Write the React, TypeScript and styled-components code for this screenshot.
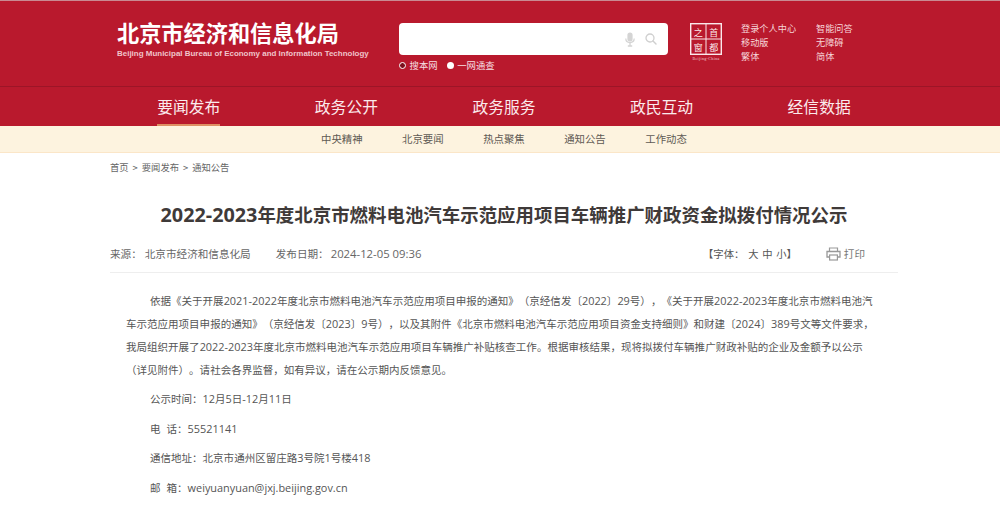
import React from 'react';
import styled, { createGlobalStyle } from 'styled-components';

const GlobalStyle = createGlobalStyle`
  html, body {
    margin: 0;
    padding: 0;
    background: #fff;
    font-family: "Open Sans", "Noto Sans CJK SC", sans-serif;
    text-spacing-trim: space-all;
    overflow: hidden;
  }
`;

const Page = styled.div`
  width: 1000px;
  height: 509px;
  overflow: hidden;
`;

const Header = styled.header`
  background: #b9192d;
  border-top: 1px solid #c98a92;
`;

const TopBar = styled.div`
  height: 85px;
  display: flex;
  padding-left: 117px;
  border-bottom: 1px solid #9c1527;
`;

const Brand = styled.div`
  width: 282px;
  padding-top: 18px;
  flex-shrink: 0;
`;

const BrandName = styled.div`
  font-family: "Noto Sans CJK SC", sans-serif;
  font-size: 22.2px;
  line-height: 26px;
  font-weight: 700;
  color: #fff;
  white-space: nowrap;
`;

const BrandEnglish = styled.div`
  margin-top: 3px;
  font-family: "Liberation Sans", sans-serif;
  font-size: 7.97px;
  line-height: 11px;
  font-weight: 700;
  color: #f0c4ca;
  white-space: nowrap;
`;

const SearchColumn = styled.div`
  width: 269px;
  padding-top: 22px;
  flex-shrink: 0;
`;

const SearchBox = styled.div`
  height: 32px;
  background: #fff;
  border-radius: 4px;
  display: flex;
  align-items: center;
  justify-content: flex-end;
  gap: 10px;
  padding-right: 11px;
  box-sizing: border-box;
`;

const ScopeRow = styled.div`
  display: flex;
  gap: 9px;
  margin-top: 3px;
`;

const Scope = styled.div`
  display: flex;
  align-items: center;
  gap: 3.5px;
  font-family: "Noto Sans CJK SC", sans-serif;
  font-size: 9.4px;
  line-height: 14px;
  color: #f6dfe2;
`;

const Dot = styled.span<{ $checked?: boolean }>`
  width: 7px;
  height: 7px;
  border-radius: 50%;
  box-sizing: border-box;
  background: ${(p) => (p.$checked ? '#7c0f1d' : '#fff')};
  border: ${(p) => (p.$checked ? '1.5px solid #fff' : 'none')};
`;

const Emblem = styled.div`
  margin: 22px 0 0 20px;
  width: 36px;
  flex-shrink: 0;
`;

const LinkGrid = styled.div`
  display: grid;
  grid-template-columns: 75px auto;
  grid-auto-rows: 14px;
  margin: 20px 0 0 17px;
  font-family: "Noto Sans CJK SC", sans-serif;
  font-size: 9.2px;
  line-height: 14px;
  color: #f6d5d9;
`;

const NavBar = styled.nav`
  height: 39px;
  padding-left: 110px;
  display: flex;
`;

const NavItem = styled.a<{ $active?: boolean }>`
  width: 157.6px;
  display: flex;
  justify-content: center;
  span {
    display: block;
    height: 37px;
    font-family: "Noto Sans CJK SC", sans-serif;
    font-size: 15.8px;
    line-height: 39px;
    color: #fbeaec;
    white-space: nowrap;
    border-bottom: 2px solid ${(p) => (p.$active ? '#de8f63' : 'transparent')};
  }
`;

const SubNav = styled.div`
  height: 26px;
  background: #fdf3df;
  border-bottom: 1px solid #fbe6c8;
  display: flex;
  gap: 39.5px;
  padding-left: 321px;
`;

const SubItem = styled.a`
  font-family: "Noto Sans CJK SC", sans-serif;
  font-size: 10.4px;
  line-height: 26px;
  color: #5f5a54;
  white-space: nowrap;
`;

const Main = styled.main`
  width: 788px;
  margin-left: 110px;
`;

const Crumbs = styled.div`
  display: flex;
  gap: 4px;
  padding-top: 7px;
  font-family: "Noto Sans CJK SC", sans-serif;
  font-size: 9.3px;
  line-height: 14px;
  color: #666;
`;

const Title = styled.h1`
  margin: 29px 0 0;
  font-family: "Open Sans", "Noto Sans CJK SC", sans-serif;
  font-size: 18.45px;
  line-height: 24px;
  font-weight: 700;
  color: #3f3a39;
  text-align: center;
  white-space: nowrap;
`;

const TitleYear = styled.span`
  font-size: 19.8px;
  line-height: 0;
`;

const Meta = styled.div`
  margin-top: 19px;
  height: 26px;
  display: flex;
  align-items: flex-start;
  border-bottom: 1px solid #eeeeee;
  font-size: 10.6px;
  line-height: 16px;
  color: #666;
  white-space: nowrap;
`;

const MetaLabel = styled.span<{ $gap?: number }>`
  margin-right: ${(p) => p.$gap ?? 2}px;
`;

const MetaValue = styled.span<{ $gap?: number }>`
  margin-right: ${(p) => p.$gap ?? 0}px;
`;

const MetaDate = styled.span`
  font-size: 11.3px;
`;

const MetaRight = styled.div`
  margin-left: auto;
  display: flex;
  align-items: center;
  height: 16px;
  padding-right: 33px;
`;

const FontSizer = styled.span`
  font-size: 10.3px;
  margin-right: 29px;
  color: #555;
`;

const Sizes = styled.span`
  margin-left: 4px;
  word-spacing: 1px;
`;

const Print = styled.span`
  display: flex;
  align-items: center;
  gap: 3px;
  color: #777;
`;

const Article = styled.article`
  margin-top: 17px;
  font-size: 10.52px;
  line-height: 23px;
  color: #555;
`;

const Para = styled.p`
  margin: 0 0 6.5px;
  text-indent: 40px;
`;

const BodyPara = styled.div`
  margin: 0 0 6px;
  padding-left: 16px;
`;

const Line = styled.span<{ $lead?: boolean }>`
  display: block;
  white-space: nowrap;
  padding-left: ${(p) => (p.$lead ? 24 : 0)}px;
`;

// latin runs sit a little larger than the CJK around them
const Num = styled.span`
  font-size: 10.9px;
  line-height: 0;
`;

const SpacedChar = styled.span`
  margin-right: 6px;
`;

const MicIcon = () => (
  <svg width="10" height="15" viewBox="0 0 10 15" aria-hidden="true">
    <rect x="2.4" y="0.5" width="5.2" height="9" rx="2.6" fill="#d4d4d4" />
    <path d="M0.8 6.5c0 5.4 8.4 5.4 8.4 0" fill="none" stroke="#d4d4d4" strokeWidth="1.2" />
    <path d="M5 11v2.6M2.8 14h4.4" stroke="#d4d4d4" strokeWidth="1.3" />
  </svg>
);

const SearchIcon = () => (
  <svg width="12" height="12" viewBox="0 0 12 12" aria-hidden="true">
    <circle cx="5" cy="5" r="4" fill="none" stroke="#cfcfcf" strokeWidth="1.3" />
    <path d="M8 8l3 3" stroke="#cfcfcf" strokeWidth="1.4" strokeLinecap="round" />
  </svg>
);

const CapitalLogo = () => (
  <svg width="36" height="38" viewBox="0 0 36 38" aria-hidden="true" fontFamily='"Noto Sans CJK SC", sans-serif'>
    <rect x="2.7" y="0.7" width="30.6" height="30.6" fill="none" stroke="#fbe9eb" strokeWidth="1.4" />
    <path d="M18 1v30M3 16h30" stroke="#fbe9eb" strokeWidth="1" />
    <text x="10.2" y="12.5" fontSize="9" fill="#fbe9eb" textAnchor="middle">之</text>
    <text x="25.8" y="12.5" fontSize="9" fill="#fbe9eb" textAnchor="middle">首</text>
    <text x="10.2" y="27.5" fontSize="9" fill="#fbe9eb" textAnchor="middle">窗</text>
    <text x="25.8" y="27.5" fontSize="9" fill="#fbe9eb" textAnchor="middle">都</text>
    <text x="18" y="37" fontSize="4" letterSpacing="0.35" fill="#f3cdd2" textAnchor="middle" fontFamily='"Liberation Serif", serif'>Beijing-China</text>
  </svg>
);

const PrinterIcon = () => (
  <svg width="15" height="14" viewBox="0 0 15 14" aria-hidden="true">
    <path d="M3.5 4V1h8v3" fill="none" stroke="#999" strokeWidth="1.2" />
    <path d="M3.5 10H1V4.5h13V10h-2.5" fill="none" stroke="#999" strokeWidth="1.3" />
    <rect x="3.6" y="8" width="7.8" height="5" fill="none" stroke="#999" strokeWidth="1.2" />
  </svg>
);

const navItems = ['要闻发布', '政务公开', '政务服务', '政民互动', '经信数据'];
const subItems = ['中央精神', '北京要闻', '热点聚焦', '通知公告', '工作动态'];
const topLinks = ['登录个人中心', '智能问答', '移动版', '无障碍', '繁体', '简体'];

export default function App() {
  return (
    <Page>
      <GlobalStyle />
      <Header>
        <TopBar>
          <Brand>
            <BrandName>北京市经济和信息化局</BrandName>
            <BrandEnglish>Beijing Municipal Bureau of Economy and Information Technology</BrandEnglish>
          </Brand>
          <SearchColumn>
            <SearchBox>
              <MicIcon />
              <SearchIcon />
            </SearchBox>
            <ScopeRow>
              <Scope><Dot $checked />搜本网</Scope>
              <Scope><Dot />一网通查</Scope>
            </ScopeRow>
          </SearchColumn>
          <Emblem><CapitalLogo /></Emblem>
          <LinkGrid>
            {topLinks.map((t) => <a key={t}>{t}</a>)}
          </LinkGrid>
        </TopBar>
        <NavBar>
          {navItems.map((t, i) => (
            <NavItem key={t} $active={i === 0}><span>{t}</span></NavItem>
          ))}
        </NavBar>
      </Header>
      <SubNav>
        {subItems.map((t) => <SubItem key={t}>{t}</SubItem>)}
      </SubNav>
      <Main>
        <Crumbs>
          <span>首页</span><span>&gt;</span><span>要闻发布</span><span>&gt;</span><span>通知公告</span>
        </Crumbs>
        <Title><TitleYear>2022-2023</TitleYear>年度北京市燃料电池汽车示范应用项目车辆推广财政资金拟拨付情况公示</Title>
        <Meta>
          <MetaLabel $gap={3}>来源：</MetaLabel>
          <MetaValue $gap={25}>北京市经济和信息化局</MetaValue>
          <MetaLabel>发布日期：</MetaLabel>
          <MetaDate>2024-12-05 09:36</MetaDate>
          <MetaRight>
            <FontSizer>【字体：<Sizes>大 中 小</Sizes>】</FontSizer>
            <Print><PrinterIcon />打印</Print>
          </MetaRight>
        </Meta>
        <Article>
          <BodyPara>
            <Line $lead>依据《关于开展<Num>2021-2022</Num>年度北京市燃料电池汽车示范应用项目申报的通知》（京经信发〔<Num>2022</Num>〕<Num>29</Num>号），《关于开展<Num>2022-2023</Num>年度北京市燃料电池汽</Line>
            <Line>车示范应用项目申报的通知》（京经信发〔<Num>2023</Num>〕<Num>9</Num>号），以及其附件《北京市燃料电池汽车示范应用项目资金支持细则》和财建〔<Num>2024</Num>〕<Num>389</Num>号文等文件要求，</Line>
            <Line>我局组织开展了<Num>2022-2023</Num>年度北京市燃料电池汽车示范应用项目车辆推广补贴核查工作。根据审核结果，现将拟拨付车辆推广财政补贴的企业及金额予以公示</Line>
            <Line>（详见附件）。请社会各界监督，如有异议，请在公示期内反馈意见。</Line>
          </BodyPara>
          <Para>公示时间：<Num>12</Num>月<Num>5</Num>日<Num>-12</Num>月<Num>11</Num>日</Para>
          <Para><SpacedChar>电</SpacedChar>话：<Num>55521141</Num></Para>
          <Para>通信地址：北京市通州区留庄路<Num>3</Num>号院<Num>1</Num>号楼<Num>418</Num></Para>
          <Para><SpacedChar>邮</SpacedChar>箱：<Num>weiyuanyuan@jxj.beijing.gov.cn</Num></Para>
        </Article>
      </Main>
    </Page>
  );
}
